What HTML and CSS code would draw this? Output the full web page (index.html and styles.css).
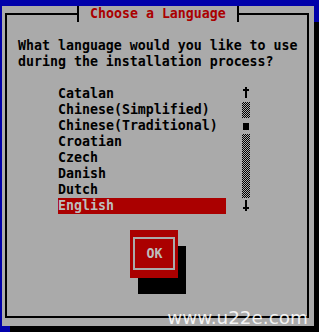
FILE: index.html
```html
<!DOCTYPE html>
<html>
<head>
<meta charset="utf-8">
<link rel="stylesheet" href="styles.css">
</head>
<body>
<div class="screen">
  <div class="dialog">
    <div class="frame">
      <p class="prompt">What language would you like to use<br>during the installation process?</p>
      <div class="listrow">
        <ul class="list">
          <li>Catalan</li>
          <li>Chinese(Simplified)</li>
          <li>Chinese(Traditional)</li>
          <li>Croatian</li>
          <li>Czech</li>
          <li>Danish</li>
          <li>Dutch</li>
          <li class="selected">English</li>
        </ul>
        <div class="scrollbar">
          <div class="sb-cell">
            <svg width="8" height="16" viewBox="0 0 8 16"><rect x="3" y="1" width="2" height="2" fill="#000"/><rect x="1" y="3" width="6" height="2" fill="#000"/><rect x="3" y="5" width="2" height="7" fill="#000"/></svg>
          </div>
          <div class="sb-cell shade"></div>
          <div class="sb-cell thumb-cell"><span class="thumb"></span></div>
          <div class="sb-cell shade tall"></div>
          <div class="sb-cell">
            <svg width="8" height="16" viewBox="0 0 8 16"><rect x="3" y="2" width="2" height="7" fill="#000"/><rect x="1" y="9" width="6" height="2" fill="#000"/><rect x="3" y="11" width="2" height="2" fill="#000"/></svg>
          </div>
        </div>
      </div>
      <div class="btnrow">
        <div class="ok"><span class="ok-frame"><span class="ok-label">OK</span></span></div>
      </div>
    </div>
    <div class="title"><span class="title-text">Choose a Language</span></div>
  </div>
  <div class="watermark">www.u22e.com</div>
</div>
</body>
</html>
```

FILE: styles.css
```css
html, body {
  margin: 0;
  padding: 0;
  background: #0000aa;
  overflow: hidden;
}
.screen {
  position: relative;
  width: 319px;
  height: 332px;
  overflow: hidden;
  padding: 6px 0 0 2px;
  box-sizing: border-box;
  font-family: "DejaVu Sans Mono", "Liberation Mono", monospace;
  font-weight: bold;
  font-size: 13.288px;
  line-height: 16px;
  color: #000;
}
.dialog {
  position: relative;
  width: 312px;
  height: 320px;
  background: #aaaaaa;
  box-shadow: 8px 16px 0 #000;
  padding: 7px 5px 8px 3px;
  box-sizing: border-box;
}
.frame {
  height: 100%;
  box-sizing: border-box;
  border: 2px solid #000;
  padding: 23px 0 0 11px;
}
.prompt {
  margin: 0;
  white-space: pre;
}
.listrow {
  display: flex;
  margin-top: 16px;
  margin-left: 40px;
  gap: 16px;
}
.list {
  list-style: none;
  margin: 0;
  padding: 0;
  width: 168px;
}
.list li {
  height: 16px;
  white-space: pre;
}
.list li.selected {
  background: #aa0000;
  color: #bdbdbd;
}
.scrollbar {
  width: 8px;
  display: flex;
  flex-direction: column;
}
.sb-cell {
  height: 16px;
  position: relative;
}
.sb-cell svg {
  display: block;
}
.shade {
  background-image: repeating-conic-gradient(#000 0 25%, #aaaaaa 0 50%);
  background-size: 2px 2px;
}
.shade.tall {
  height: 64px;
}
.thumb-cell {
  display: flex;
  align-items: center;
  justify-content: center;
}
.thumb {
  display: block;
  width: 6px;
  height: 7px;
  background: #000;
}
.btnrow {
  margin-top: 16px;
  padding-left: 112px;
}
.ok {
  width: 48px;
  height: 48px;
  background: #aa0000;
  box-shadow: 8px 16px 0 #000;
  padding: 7px 3px 8px 3px;
  box-sizing: border-box;
}
.ok-frame {
  display: flex;
  align-items: center;
  justify-content: center;
  height: 100%;
  box-sizing: border-box;
  border: 2px solid #aaaaaa;
  color: #bdbdbd;
}
.ok-label {
  padding-left: 1px;
}
.title {
  position: absolute;
  top: 0;
  left: 75px;
  width: 162px;
  height: 16px;
  box-sizing: border-box;
  border-left: 2px solid #000;
  border-right: 2px solid #000;
  background: #aaaaaa;
  padding-left: 11px;
  color: #aa0000;
  white-space: pre;
}
.watermark {
  position: absolute;
  right: 11px;
  top: 308px;
  font-family: "DejaVu Sans", Verdana, sans-serif;
  font-weight: normal;
  font-size: 18.4px;
  line-height: 20px;
  color: rgba(255, 255, 255, 0.88);
}
```
